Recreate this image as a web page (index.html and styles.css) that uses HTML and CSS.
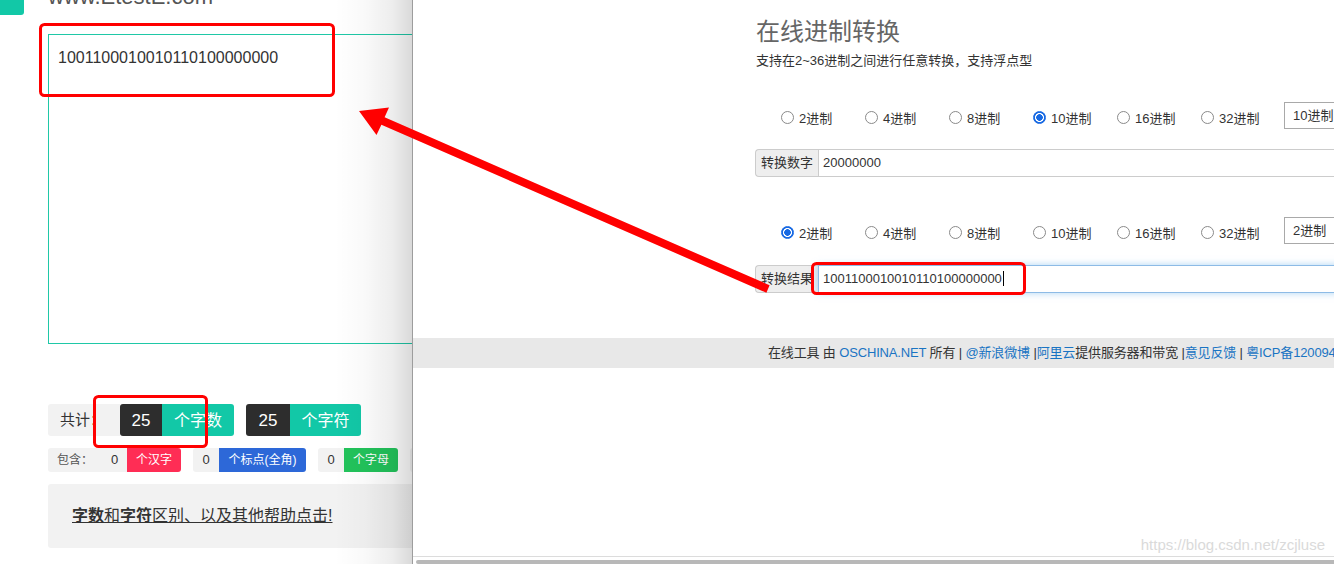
FILE: index.html
```html
<!DOCTYPE html>
<html lang="zh-CN">
<head>
<meta charset="utf-8">
<title>进制转换</title>
<link rel="stylesheet" href="styles.css">
</head>
<body>
<div class="screen">
  <section class="win-left">
    <div class="lw-inner">
      <div class="brand">
        <div class="logo"></div>
        <div class="site">www.EtestE.com</div>
      </div>
      <div class="editor">1001100010010110100000000</div>
      <div class="stats">
        <div class="grp">
          <span class="lbl">共计：</span>
          <span class="num">25</span>
          <span class="unit">个字数</span>
        </div>
        <div class="grp">
          <span class="num num-w">25</span>
          <span class="unit unit-w">个字符</span>
        </div>
      </div>
      <div class="contains">
        <div class="grp">
          <span class="c-lbl">包含：</span>
          <span class="c-num">0</span>
          <span class="c-unit red">个汉字</span>
        </div>
        <div class="grp">
          <span class="c-num">0</span>
          <span class="c-unit blue">个标点(全角)</span>
        </div>
        <div class="grp">
          <span class="c-num">0</span>
          <span class="c-unit green">个字母</span>
        </div>
        <div class="grp">
          <span class="c-num">0</span>
          <span class="c-unit teal">个数字</span>
        </div>
      </div>
      <div class="help"><a class="help-link"><b>字数</b>和<b>字符</b>区别、以及其他帮助点击!</a></div>
    </div>
  </section>

  <section class="win-right">
    <div class="conv">
      <h1 class="title">在线进制转换</h1>
      <p class="sub">支持在2~36进制之间进行任意转换，支持浮点型</p>

      <div class="radios">
        <label class="opt"><span class="radio"></span>2进制</label>
        <label class="opt"><span class="radio"></span>4进制</label>
        <label class="opt"><span class="radio"></span>8进制</label>
        <label class="opt"><span class="radio on"></span>10进制</label>
        <label class="opt"><span class="radio"></span>16进制</label>
        <label class="opt"><span class="radio"></span>32进制</label>
        <div class="sel">10进制</div>
      </div>
      <div class="ig">
        <span class="addon">转换数字</span>
        <span class="field">20000000</span>
      </div>

      <div class="radios radios-2">
        <label class="opt"><span class="radio on"></span>2进制</label>
        <label class="opt"><span class="radio"></span>4进制</label>
        <label class="opt"><span class="radio"></span>8进制</label>
        <label class="opt"><span class="radio"></span>10进制</label>
        <label class="opt"><span class="radio"></span>16进制</label>
        <label class="opt"><span class="radio"></span>32进制</label>
        <div class="sel">2进制</div>
      </div>
      <div class="ig ig-2">
        <span class="addon">转换结果</span>
        <span class="field focus"><span class="caret">1001100010010110100000000</span></span>
      </div>
    </div>

    <div class="footer">在线工具 由 <a>OSCHINA.NET</a> 所有 | <a>@新浪微博</a> |<a>阿里云</a>提供服务器和带宽 |<a>意见反馈</a> | <a>粤ICP备12009483号-3</a></div>
    <div class="spacer"></div>
    <div class="hscroll"><div class="thumb"></div></div>
    <div class="watermark">https://blog.csdn.net/zcjluse</div>
  </section>

  <svg class="annot" width="1334" height="564" viewBox="0 0 1334 564">
    <rect x="40.5" y="24.5" width="293" height="71" rx="4" />
    <rect x="94.5" y="396.5" width="112" height="50" rx="4" />
    <rect x="812.5" y="263.5" width="212" height="30" rx="4" />
    <polygon class="arrow" points="359,111 389,107.5 384.6,117.3 769.6,285.3 766.4,292.7 381.4,124.7 376.5,135" />
  </svg>
</div>
</body>
</html>
```

FILE: styles.css
```css
* {
  box-sizing: border-box;
  margin: 0;
  padding: 0;
}

html,
body {
  width: 1334px;
  height: 564px;
  overflow: hidden;
}

body {
  font-family: "Liberation Sans", "Noto Sans CJK SC", sans-serif;
  background: #fff;
  color: #333;
}

.screen {
  display: flex;
  width: 1334px;
  height: 564px;
  position: relative;
}

/* ---------- left (background) window ---------- */
.win-left {
  width: 412px;
  flex: none;
  height: 564px;
  overflow: hidden;
  position: relative;
  background: #fff;
}

.win-left::after {
  content: "";
  position: absolute;
  top: 0;
  right: 0;
  width: 78px;
  height: 100%;
  background: linear-gradient(to right,
      rgba(0, 0, 0, 0) 0%,
      rgba(0, 0, 0, 0.025) 40%,
      rgba(0, 0, 0, 0.07) 75%,
      rgba(0, 0, 0, 0.15) 100%);
  pointer-events: none;
}

.lw-inner {
  width: 720px;
}

.brand {
  display: flex;
  height: 15px;
  align-items: flex-start;
}

.logo {
  width: 24px;
  height: 15px;
  background: #12c8a7;
  border-radius: 0 0 3px 0;
}

.site {
  margin-left: 24px;
  margin-top: -14px;
  font-size: 22px;
  line-height: 22px;
  color: #555;
}

.editor {
  margin: 19px 0 0 48px;
  width: 620px;
  height: 310px;
  border: 1px solid #1fc8a7;
  padding: 12px 9px 11px;
  font-size: 16px;
  line-height: 22px;
  color: #333;
}

.stats {
  display: flex;
  gap: 12px;
  margin: 60px 0 0 48px;
  height: 32px;
}

.grp {
  display: flex;
}

.lbl {
  width: 72px;
  background: #f2f2f2;
  border-radius: 3px 0 0 3px;
  padding-left: 12px;
  line-height: 32px;
  font-size: 15px;
  color: #333;
}

.num {
  width: 42px;
  background: #2d2d2d;
  color: #fff;
  text-align: center;
  font-size: 17px;
  line-height: 33px;
  border-radius: 3px 0 0 3px;
}

.num-w {
  width: 44px;
}

.unit {
  width: 72px;
  background: #12c8a7;
  color: #fff;
  text-align: center;
  font-size: 16px;
  line-height: 33px;
  border-radius: 0 3px 3px 0;
}

.unit-w {
  width: 71px;
}

.contains {
  display: flex;
  gap: 12px;
  margin: 12px 0 0 48px;
  height: 24px;
}

.c-lbl {
  width: 54px;
  background: #f2f2f2;
  border-radius: 3px 0 0 3px;
  padding-left: 9px;
  font-size: 12px;
  line-height: 24px;
  color: #555;
}

.c-num {
  width: 25px;
  background: #f2f2f2;
  text-align: center;
  font-size: 13px;
  line-height: 24px;
  color: #333;
}

.grp>.c-num:first-child {
  width: 26px;
  border-radius: 3px 0 0 3px;
}

.c-unit {
  width: 54px;
  color: #fff;
  text-align: center;
  font-size: 12px;
  line-height: 24px;
  border-radius: 0 3px 3px 0;
}

.red {
  background: #ff2d55;
}

.blue {
  width: 87px;
  background: #2d68d8;
}

.green {
  background: #22c35b;
}

.teal {
  background: #12c8a7;
}

.help {
  margin: 12px 0 0 48px;
  width: 620px;
  height: 64px;
  background: #f2f2f2;
  border-radius: 3px;
  padding-left: 24px;
  line-height: 64px;
  font-size: 16px;
}

.help-link {
  color: #333;
  text-decoration: underline;
}

.help-link b {
  font-weight: bold;
}

/* ---------- right (front) window ---------- */
.win-right {
  flex: 1;
  height: 564px;
  border-left: 1px solid #9d9d9d;
  background: #fff;
  overflow: hidden;
  display: flex;
  flex-direction: column;
  position: relative;
}

.conv {
  padding-left: 342px;
  width: 1100px;
}

.title {
  margin-top: 16px;
  padding-left: 1px;
  font-size: 24px;
  line-height: 32px;
  font-weight: normal;
  color: #666;
}

.sub {
  margin-top: 4px;
  padding-left: 1px;
  font-size: 13px;
  line-height: 18px;
  color: #333;
}

.radios {
  display: flex;
  align-items: flex-start;
  margin-top: 32px;
  padding-left: 26px;
  height: 27px;
}

.radios-2 {
  margin-top: 40px;
}

.opt {
  width: 84px;
  flex: none;
  display: flex;
  align-items: center;
  gap: 5px;
  height: 18px;
  margin-top: 6px;
  font-size: 13px;
  color: #333;
}

.radio {
  width: 13px;
  height: 13px;
  flex: none;
  border: 1px solid #8a8a8a;
  border-radius: 50%;
  background: #fff;
}

.radio.on {
  border-color: #1769e3;
  background: radial-gradient(circle, #1769e3 0 3px, #fff 3.6px 4.2px, #1769e3 4.8px);
}

.sel {
  width: 120px;
  height: 27px;
  flex: none;
  margin-left: -1px;
  border: 1px solid #a9a9a9;
  padding-left: 8px;
  font-size: 13px;
  line-height: 25px;
  color: #333;
}

.ig {
  display: flex;
  height: 28px;
  margin-top: 20px;
  width: 700px;
}

.ig-2 {
  margin-top: 21px;
}

.addon {
  background: #eee;
  border: 1px solid #ccc;
  border-right: 0;
  border-radius: 4px 0 0 4px;
  padding: 0 5px;
  font-size: 13px;
  line-height: 26px;
  color: #333;
}

.field {
  flex: 1;
  border: 1px solid #ccc;
  padding-left: 4px;
  font-size: 13px;
  line-height: 26px;
  color: #333;
}

.field.focus {
  border-color: #8dbbe6;
  box-shadow: 0 0 7px rgba(102, 175, 233, 0.55);
}

.caret {
  border-right: 1px solid #000;
  padding-right: 1px;
}

.footer {
  margin-top: 45px;
  height: 30px;
  flex: none;
  background: #e8e8e8;
  padding-left: 355px;
  font-size: 13px;
  line-height: 30px;
  letter-spacing: -0.15px;
  white-space: nowrap;
  color: #333;
}

.footer a {
  color: #1a74c3;
  text-decoration: none;
}

.spacer {
  flex: 1;
}

.hscroll {
  flex: none;
  height: 8px;
  border-top: 1px solid #dcdcdc;
  padding: 3px 0 0 3px;
}

.thumb {
  height: 4px;
  background: #b8b8b8;
  border-radius: 3px 0 0 3px;
}

.watermark {
  position: absolute;
  right: 9px;
  top: 537px;
  font-size: 15px;
  line-height: 16px;
  color: #dadada;
}

/* ---------- annotations ---------- */
.annot {
  position: absolute;
  left: 0;
  top: 0;
  pointer-events: none;
}

.annot rect {
  fill: none;
  stroke: #ff0000;
  stroke-width: 3;
}

.annot .arrow {
  fill: #ff0000;
}
```
